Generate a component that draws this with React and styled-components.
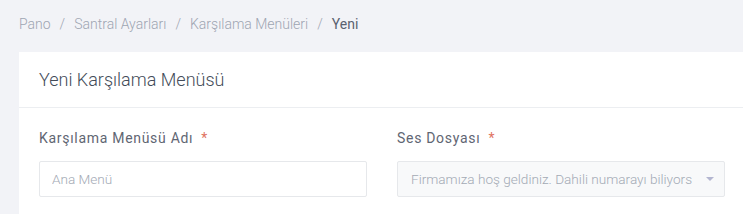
import React from 'react';
import { styled, createGlobalStyle } from 'styled-components';

const Global = createGlobalStyle`
	html, body {
		margin: 0;
		padding: 0;
		background: #f2f3f7;
		overflow: hidden;
	}
	* {
		box-sizing: border-box;
	}
`;

const Page = styled.div`
	padding: 11px 0 0 19px;
	font-family: Roboto, 'Liberation Sans', sans-serif;
	width: 800px;
`;

const Crumbs = styled.nav`
	display: flex;
	align-items: center;
	height: 25px;
	font-size: 14px;
	font-weight: 300;
	margin-bottom: 16px;
`;

const Crumb = styled.span`
	color: ${(props) => (props.active ? '#5a6270' : '#9ea5b2')};
	font-weight: ${(props) => (props.active ? 400 : 300)};
`;

const Sep = styled.span`
	padding: 0 9px;
	color: #9ea5b2;
`;

const Card = styled.section`
	width: 726px;
	background: #fff;
`;

const CardHeader = styled.header`
	height: 56px;
	display: flex;
	align-items: center;
	padding: 0 20px;
	border-bottom: 1px solid #eceef1;
`;

const CardTitle = styled.h1`
	margin: 0;
	font-size: 18px;
	font-weight: 300;
	color: #434c59;
`;

const CardBody = styled.div`
	padding: 22px 20px 20px;
	display: grid;
	grid-template-columns: 328px 328px;
	column-gap: 30px;
`;

const Field = styled.div`
	display: flex;
	flex-direction: column;
`;

const Label = styled.label`
	font-size: 14px;
	font-weight: 400;
	letter-spacing: 0.7px;
	color: #5f6673;
	height: 20px;
	margin-bottom: 11px;
`;

const Req = styled.span`
	color: #e0735f;
	margin-left: 8px;
`;

const Input = styled.input`
	height: 36px;
	border: 1px solid #e6e8eb;
	border-radius: 2px;
	padding: 0 12px;
	font-family: inherit;
	font-size: 13.6px;
	font-weight: 300;
	color: #495057;
	outline: none;
	&::placeholder {
		color: #a3aab5;
	}
`;

const Select = styled.div`
	height: 36px;
	border: 1px solid #e6e8eb;
	border-radius: 2px;
	background: #f8f9fa;
	padding: 0 10px 0 13px;
	display: flex;
	align-items: center;
	justify-content: space-between;
	font-size: 13.6px;
	font-weight: 300;
	color: #a3aab5;
`;

const SelectText = styled.span`
	white-space: nowrap;
`;

const Caret = styled.span`
	width: 0;
	height: 0;
	border-left: 4px solid transparent;
	border-right: 4px solid transparent;
	border-top: 4px solid #b3b6d0;
	margin-left: 8px;
	flex-shrink: 0;
`;

const App = () => {
	return (
		<Page>
			<Global />
			<Crumbs>
				<Crumb>Pano</Crumb>
				<Sep>/</Sep>
				<Crumb>Santral Ayarları</Crumb>
				<Sep>/</Sep>
				<Crumb>Karşılama Menüleri</Crumb>
				<Sep>/</Sep>
				<Crumb active>Yeni</Crumb>
			</Crumbs>
			<Card>
				<CardHeader>
					<CardTitle>Yeni Karşılama Menüsü</CardTitle>
				</CardHeader>
				<CardBody>
					<Field>
						<Label>
							Karşılama Menüsü Adı<Req>*</Req>
						</Label>
						<Input placeholder="Ana Menü" />
					</Field>
					<Field>
						<Label>
							Ses Dosyası<Req>*</Req>
						</Label>
						<Select>
							<SelectText>Firmamıza hoş geldiniz. Dahili numarayı biliyors</SelectText>
							<Caret />
						</Select>
					</Field>
				</CardBody>
			</Card>
		</Page>
	);
};

export default App;
